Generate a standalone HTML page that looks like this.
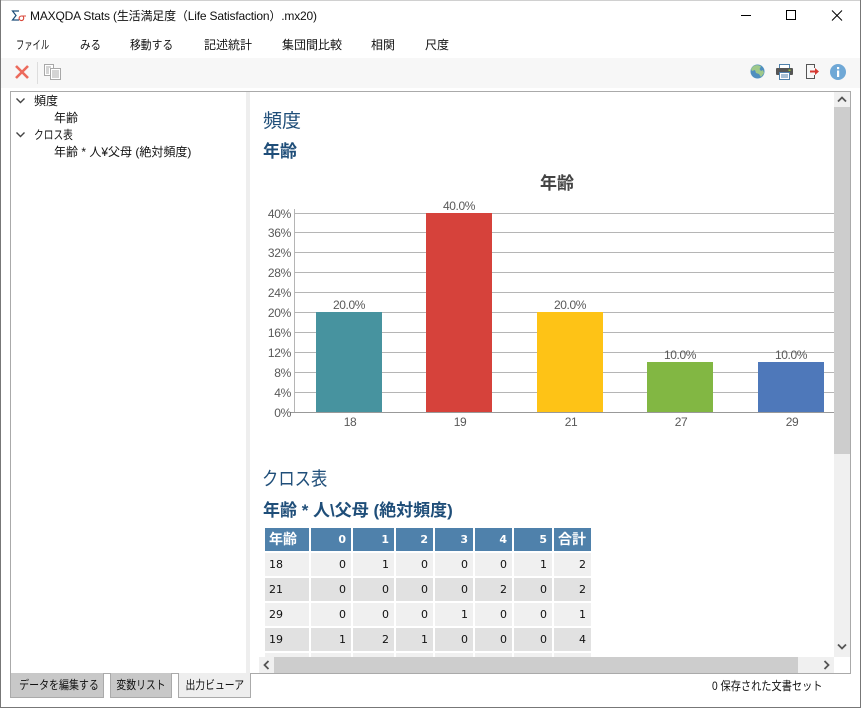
<!DOCTYPE html>
<html lang="ja"><head><meta charset="utf-8"><title>MAXQDA Stats</title>
<style>
html,body{margin:0;padding:0;background:#fff}
#w{position:relative;width:861px;height:708px;overflow:hidden;background:#fff;font-family:"Liberation Sans","Noto Sans CJK JP",sans-serif;font-size:12px;color:#111}
#w div,#w svg{position:absolute}
.t{white-space:nowrap;line-height:16px}
.h1{color:#1f4e79;font-size:19px;line-height:24px;white-space:nowrap}
.h2{color:#1f4e79;font-size:17px;font-weight:bold;line-height:20px;white-space:nowrap}
.c{font-family:"DejaVu Sans","Noto Sans CJK JP",sans-serif;font-size:11px;line-height:23px;height:23px;box-sizing:border-box;padding:0 5px 0 4px;text-align:right;color:#111}
.hd{background:#4f81ab;color:#fff;font-weight:bold;height:23px}
.a{background:#f0f0f0}.b{background:#e1e1e1}
.l{text-align:left}
.tab{box-sizing:border-box;height:25px;top:673px;border:1px solid #aaa;border-top:none;text-align:center;line-height:24px;background:#c8c8c8;white-space:nowrap}
.s{display:inline-block;transform-origin:0 50%}
.m{display:inline-block;transform-origin:50% 50%}
</style></head><body><div id="w">

<!-- window border -->
<div style="left:0;top:0;width:861px;height:1px;background:#d0d0d0"></div>
<div style="left:0;top:0;width:1px;height:708px;background:#777"></div>
<div style="left:860px;top:0;width:1px;height:708px;background:#777"></div>
<div style="left:0;top:707px;width:861px;height:1px;background:#777"></div>

<!-- title bar -->
<svg style="left:11px;top:9px" width="16" height="14" viewBox="0 0 16 14"><path d="M8 2H1.500L5 6.500 1.500 11H8" fill="none" stroke="#1f4e79" stroke-width="1.200"/><path d="M15 7h-4.500a2.300 2.300 0 1 0 2.200 2.300c0-1-.4-1.800-1-2.300" fill="none" stroke="#d9483b" stroke-width="1.100"/></svg>
<div class="t" style="left:30px;top:8px;letter-spacing:-.18px">MAXQDA Stats (生活満足度（Life Satisfaction）.mx20)</div>
<svg style="left:740px;top:8px" width="110" height="16" viewBox="0 0 110 16"><path d="M1 7.500H11" stroke="#000" fill="none"/><rect x="46.500" y="2.500" width="9" height="9" fill="none" stroke="#000"/><path d="M92 2.500L102 12.500M102 2.500L92 12.500" stroke="#000" fill="none"/></svg>

<!-- menu -->
<div class="t" style="left:16px;top:37px"><span class="s" style="transform:scaleX(.69)">ファイル</span></div>
<div class="t" style="left:80px;top:37px"><span class="s" style="transform:scaleX(.875)">みる</span></div>
<div class="t" style="left:130px;top:37px"><span class="s" style="transform:scaleX(.9)">移動する</span></div>
<div class="t" style="left:204px;top:37px">記述統計</div>
<div class="t" style="left:282px;top:37px">集団間比較</div>
<div class="t" style="left:371px;top:37px">相関</div>
<div class="t" style="left:425px;top:37px">尺度</div>

<!-- toolbar -->
<div style="left:1px;top:58px;width:859px;height:30px;background:#f7f7f7"></div>
<svg style="left:14px;top:64px" width="16" height="16" viewBox="0 0 16 16"><path d="M2 2L14 14M14 2L2 14" stroke="#ec6a5c" stroke-width="2.600" fill="none"/></svg>
<div style="left:37px;top:62px;width:1px;height:22px;background:#ddd"></div>
<svg style="left:44px;top:64px" width="17" height="16" viewBox="0 0 17 16"><g fill="#fff" stroke="#a8a8a8"><rect x=".5" y=".5" width="9" height="11"/><rect x="6.500" y="4.500" width="10" height="11"/></g><path d="M2 3h5M2 5h3M2 7h3M2 9h3M8 7h7M8 9h7M8 11h7M8 13h7" stroke="#a8a8a8" fill="none"/></svg>
<svg style="left:750px;top:64px" width="15" height="15" viewBox="0 0 15 15"><circle cx="7.500" cy="7.500" r="7" fill="#4f8fbf"/><path d="M3 2.500C6 .5 9 1 11 2.500L9.500 5 11 7l2-1 1 3-3 4-2-3-3-1-1-3-3 1-1-2z" fill="#9fc98a"/></svg>
<svg style="left:776px;top:64px" width="17" height="16" viewBox="0 0 17 16"><rect x="3.500" y=".5" width="10" height="5" fill="#fff" stroke="#4f81ab"/><rect x="0" y="4" width="17" height="7" rx="1" fill="#555"/><rect x="12.500" y="5.500" width="2" height="1.500" fill="#9c3"/><rect x="3.500" y="8.500" width="10" height="7" fill="#fff" stroke="#4f81ab"/><path d="M5 11h7M5 13h7" stroke="#4f81ab" fill="none"/></svg>
<svg style="left:806px;top:64px" width="14" height="15" viewBox="0 0 14 15"><path d="M8.500 4V.5H.5v14h8V11" fill="none" stroke="#555"/><path d="M4 6.500h5V4l4 3.500-4 3.500V8.500H4z" fill="#d43a32"/></svg>
<svg style="left:830px;top:64px" width="16" height="16" viewBox="0 0 16 16"><circle cx="8" cy="8" r="8" fill="#6fa8d6"/><rect x="7" y="3" width="2.200" height="2.200" fill="#fff"/><rect x="7" y="6.500" width="2.200" height="6.500" fill="#fff"/></svg>

<!-- frames -->
<div style="left:10px;top:91px;width:841px;height:1px;background:#aaa"></div>
<div style="left:10px;top:91px;width:1px;height:583px;background:#aaa"></div>
<div style="left:850px;top:91px;width:1px;height:583px;background:#aaa"></div>
<div style="left:246px;top:92px;width:4px;height:581px;background:#eee"></div>

<!-- left panel -->
<svg style="left:15px;top:96px" width="12" height="50" viewBox="0 0 12 50"><path d="M1.500 2.500L5.500 6.500 9.500 2.500M1.500 36.500L5.500 40.500 9.500 36.500" fill="none" stroke="#444" stroke-width="1.400"/></svg>
<div class="t" style="left:34px;top:93px">頻度</div>
<div class="t" style="left:54px;top:110px">年齢</div>
<div class="t" style="left:34px;top:127px"><span class="s" style="transform:scaleX(.81)">クロス表</span></div>
<div class="t" style="left:54px;top:144px">年齢 * 人¥父母 (絶対頻度)</div>

<div class="h1" style="left:263px;top:110px">頻度</div>
<div class="h2" style="left:263px;top:142px">年齢</div>

<!-- chart -->
<svg style="left:250px;top:165px" width="584" height="270" viewBox="250 165 584 270">
<g stroke="#b5b5b5" fill="none">
<path d="M295 213.500H834M295 232.500H834M295 252.500H834M295 272.500H834M295 292.500H834M295 312.500H834M295 332.500H834M295 352.500H834M295 372.500H834M295 392.500H834"/>
<path d="M294.500 209V412"/>
</g>
<path d="M290 412.500H834" stroke="#999" fill="none"/>
<rect x="316" y="312" width="66" height="100" fill="#47939f"/>
<rect x="426" y="213" width="66" height="199" fill="#d6423b"/>
<rect x="537" y="312" width="66" height="100" fill="#fec316"/>
<rect x="647" y="362" width="66" height="50" fill="#82b743"/>
<rect x="758" y="362" width="66" height="50" fill="#4e78ba"/>
<g font-family="'Liberation Sans',sans-serif" font-size="12" fill="#595959" text-anchor="end" letter-spacing="-.3">
<text x="291" y="218">40%</text><text x="291" y="237">36%</text><text x="291" y="257">32%</text><text x="291" y="277">28%</text><text x="291" y="297">24%</text><text x="291" y="317">20%</text><text x="291" y="337">16%</text><text x="291" y="357">12%</text><text x="291" y="377">8%</text><text x="291" y="397">4%</text><text x="291" y="417">0%</text>
</g>
<g font-family="'Liberation Sans',sans-serif" font-size="12" fill="#595959" text-anchor="middle" letter-spacing="-.4">
<text x="349" y="309">20.0%</text><text x="459" y="210">40.0%</text><text x="570" y="309">20.0%</text><text x="680" y="359">10.0%</text><text x="791" y="359">10.0%</text>
<text x="350" y="426">18</text><text x="460" y="426">19</text><text x="571" y="426">21</text><text x="681" y="426">27</text><text x="792" y="426">29</text>
</g>
<text x="557" y="189" font-family="'Liberation Sans','Noto Sans CJK JP',sans-serif" font-size="17" font-weight="bold" fill="#444" text-anchor="middle">年齢</text>
</svg>

<div class="h1" style="left:262px;top:468px"><span class="s" style="transform:scaleX(.86)">クロス表</span></div>
<div class="h2" style="left:263px;top:501px">年齢 * 人\父母 (絶対頻度)</div>

<!-- table header -->
<div class="c hd l" style="left:265px;top:528px;width:44px;font-size:14px;font-family:'Liberation Sans','Noto Sans CJK JP',sans-serif">年齢</div>
<div class="c hd" style="left:311px;top:528px;width:40px">0</div>
<div class="c hd" style="left:353px;top:528px;width:41px">1</div>
<div class="c hd" style="left:396px;top:528px;width:37px">2</div>
<div class="c hd" style="left:435px;top:528px;width:38px">3</div>
<div class="c hd" style="left:475px;top:528px;width:37px">4</div>
<div class="c hd" style="left:514px;top:528px;width:38px">5</div>
<div class="c hd" style="left:554px;top:528px;width:37px;font-size:14px;font-family:'Liberation Sans','Noto Sans CJK JP',sans-serif">合計</div>
<!-- row 18 -->
<div class="c a l" style="left:265px;top:553px;width:44px">18</div>
<div class="c a" style="left:311px;top:553px;width:40px">0</div>
<div class="c a" style="left:353px;top:553px;width:41px">1</div>
<div class="c a" style="left:396px;top:553px;width:37px">0</div>
<div class="c a" style="left:435px;top:553px;width:38px">0</div>
<div class="c a" style="left:475px;top:553px;width:37px">0</div>
<div class="c a" style="left:514px;top:553px;width:38px">1</div>
<div class="c a" style="left:554px;top:553px;width:37px">2</div>
<!-- row 21 -->
<div class="c b l" style="left:265px;top:578px;width:44px">21</div>
<div class="c b" style="left:311px;top:578px;width:40px">0</div>
<div class="c b" style="left:353px;top:578px;width:41px">0</div>
<div class="c b" style="left:396px;top:578px;width:37px">0</div>
<div class="c b" style="left:435px;top:578px;width:38px">0</div>
<div class="c b" style="left:475px;top:578px;width:37px">2</div>
<div class="c b" style="left:514px;top:578px;width:38px">0</div>
<div class="c b" style="left:554px;top:578px;width:37px">2</div>
<!-- row 29 -->
<div class="c a l" style="left:265px;top:603px;width:44px">29</div>
<div class="c a" style="left:311px;top:603px;width:40px">0</div>
<div class="c a" style="left:353px;top:603px;width:41px">0</div>
<div class="c a" style="left:396px;top:603px;width:37px">0</div>
<div class="c a" style="left:435px;top:603px;width:38px">1</div>
<div class="c a" style="left:475px;top:603px;width:37px">0</div>
<div class="c a" style="left:514px;top:603px;width:38px">0</div>
<div class="c a" style="left:554px;top:603px;width:37px">1</div>
<!-- row 19 -->
<div class="c b l" style="left:265px;top:628px;width:44px">19</div>
<div class="c b" style="left:311px;top:628px;width:40px">1</div>
<div class="c b" style="left:353px;top:628px;width:41px">2</div>
<div class="c b" style="left:396px;top:628px;width:37px">1</div>
<div class="c b" style="left:435px;top:628px;width:38px">0</div>
<div class="c b" style="left:475px;top:628px;width:37px">0</div>
<div class="c b" style="left:514px;top:628px;width:38px">0</div>
<div class="c b" style="left:554px;top:628px;width:37px">4</div>
<!-- clipped row -->
<div class="a" style="left:265px;top:653px;width:44px;height:4px"></div>
<div class="a" style="left:311px;top:653px;width:40px;height:4px"></div>
<div class="a" style="left:353px;top:653px;width:41px;height:4px"></div>
<div class="a" style="left:396px;top:653px;width:37px;height:4px"></div>
<div class="a" style="left:435px;top:653px;width:38px;height:4px"></div>
<div class="a" style="left:475px;top:653px;width:37px;height:4px"></div>
<div class="a" style="left:514px;top:653px;width:38px;height:4px"></div>
<div class="a" style="left:554px;top:653px;width:37px;height:4px"></div>

<!-- vertical scrollbar -->
<div style="left:834px;top:92px;width:16px;height:565px;background:#f0f0f0"></div>
<div style="left:834px;top:107px;width:16px;height:347px;background:#cdcdcd"></div>
<svg style="left:834px;top:92px" width="16" height="565" viewBox="0 0 16 565"><path d="M4 9.500L8 5.500 12 9.500M4 552.500L8 556.500 12 552.500" fill="none" stroke="#555" stroke-width="1.800"/></svg>

<!-- horizontal scrollbar -->
<div style="left:259px;top:657px;width:575px;height:16px;background:#f0f0f0"></div>
<div style="left:274px;top:657px;width:524px;height:16px;background:#cdcdcd"></div>
<svg style="left:259px;top:657px" width="575" height="16" viewBox="0 0 575 16"><path d="M9.500 4L5.500 8 9.500 12M565.500 4L569.500 8 565.500 12" fill="none" stroke="#555" stroke-width="1.800"/></svg>
<div style="left:10px;top:673px;width:841px;height:1px;background:#aaa"></div>

<!-- tabs -->
<div class="tab" style="left:10px;width:94px"><span class="m" style="transform:scaleX(.83)">データを編集する</span></div>
<div class="tab" style="left:110px;width:62px"><span class="m" style="transform:scaleX(.82)">変数リスト</span></div>
<div class="tab" style="left:178px;width:73px;background:#eee"><span class="m" style="transform:scaleX(.82)">出力ビューア</span></div>

<div class="t" style="left:712px;top:678px"><span class="s" style="transform:scaleX(.85)">0 保存された文書セット</span></div>
</div></body></html>
